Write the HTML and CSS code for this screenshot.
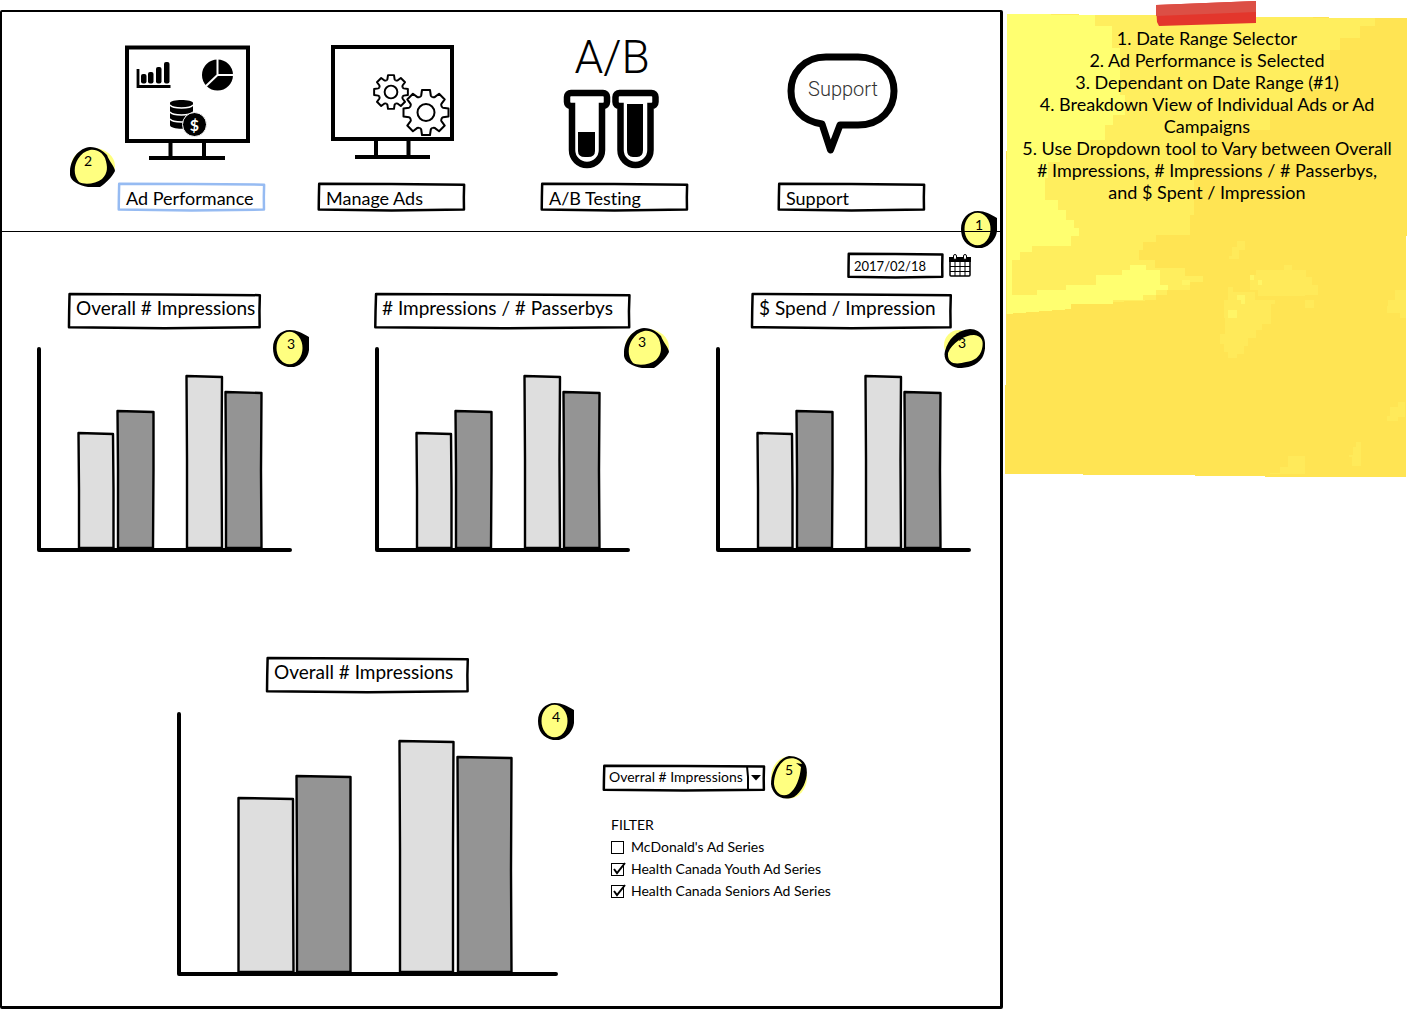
FILE: index.html
```html
<!DOCTYPE html>
<html lang="en">
<head>
<meta charset="utf-8">
<title>Ad Performance</title>
<link rel="stylesheet" href="styles.css">
</head>
<body>
<svg class="defs" aria-hidden="true">
  <symbol id="frame" viewBox="0 0 100 100" preserveAspectRatio="none" overflow="visible">
    <path d="M.8 3L50 4L99.400 6L99.200 50L99.300 95L50 98L.5 95L.6 50Z" vector-effect="non-scaling-stroke"/>
  </symbol>
  <symbol id="badge-a" viewBox="0 0 36 37">
    <path d="M17 0C24 0 29 3 36 7V20C35 28 29 35 21 37H15C5 35 0 28 0 18C0 8 7 0 17 0Z"/>
    <ellipse cx="16.500" cy="18" rx="13" ry="16.300" fill="#ffff80"/>
  </symbol>
  <symbol id="badge-b" viewBox="0 0 45 40">
    <ellipse cx="23" cy="19" rx="22" ry="18" fill="#ffff80"/>
    <path d="M20 0C28 0 33 4 37 8C39 14 45 20 45 24C42 30 36 36 30 40H18C8 38 1 34 0 28C-1 14 8 1 20 0Z"/>
    <path d="M20 3C28 2 32 6 35 11C38 20 38 26 32 32C26 37 14 38 9 35C3 28 4 18 8 12C11 7 15 4 20 3Z" fill="#ffff80"/>
  </symbol>
  <symbol id="badge-c" viewBox="0 0 41 39">
    <ellipse cx="15" cy="16" rx="15" ry="15" fill="#ffff80"/>
    <path d="M1 22C4 10 13 1 26 0C32 0 36 3 39 7C42 12 42 22 38 29C32 37 24 39 14 39C4 37-1 30 1 22Z"/>
    <path d="M4 24C8 14 20 6 30 6C38 7 40 12 38 20C36 28 30 32 22 33C12 36 3 35 4 24Z" fill="#ffff80"/>
  </symbol>
  <symbol id="badge-d" viewBox="0 0 36 43">
    <ellipse cx="18" cy="21.500" rx="18" ry="21" fill="#ffff80"/>
    <path d="M18 0C26 0 33 4 35 10C38 20 33 34 23 41C10 46 1 38 0 28C0 15 8 2 18 0Z"/>
    <path d="M16 3C23 1 29 4 31 8L25 7L30 11C29 22 25 33 18 38C10 42 4 36 3 28C3 18 8 6 16 3Z" fill="#ffff80"/>
  </symbol>
  <symbol id="gear" viewBox="-24 -24 48 48" overflow="visible">
    <g fill="#fff" stroke="#000" stroke-linejoin="round">
      <circle r="16.500" stroke="none"/>
      <g id="quarter"><path id="tooth" d="M-6.500-15.500Q-5-16-4.800-17L-4-22.500H4L4.800-17Q5-16 6.500-15.500"/><use href="#tooth" transform="rotate(45)"/></g>
      <use href="#quarter" transform="rotate(90)"/><use href="#quarter" transform="rotate(180)"/><use href="#quarter" transform="rotate(270)"/>
      <circle r="8.500"/>
    </g>
  </symbol>
  <symbol id="bars-small" viewBox="36 346 257 206">
    <g stroke="#000" stroke-width="2.400" stroke-linejoin="round">
      <path d="M78.500 433L113 434L113.500 490V548H79V490Z" fill="#dedede"/>
      <path d="M117.500 411L153.500 412V470L153 548H118V470Z" fill="#949494"/>
      <path d="M186.500 376L222 377L221.500 460L222 548H187V460Z" fill="#dedede"/>
      <path d="M225.500 392L261.500 393L261 470L261.500 548H226V470Z" fill="#949494"/>
    </g>
    <path d="M39 349V550H290" fill="none" stroke="#000" stroke-width="4" stroke-linecap="round" stroke-linejoin="round"/>
  </symbol>
</svg>

<main class="board">
  <nav class="nav">
    <a class="nav-item selected" href="#performance">
      <svg class="nav-icon" viewBox="118 28 147 150" aria-hidden="true">
        <path d="M127 47.500H248V141H127ZM170.500 143V158M204 143V158M149 158H225" fill="none" stroke="#000" stroke-width="4"/>
        <path d="M138 69V86.500H170.500" fill="none" stroke="#000" stroke-width="2.800"/>
        <rect x="141" y="74" width="5.500" height="9.500" rx="2"/><rect x="148" y="72" width="5.500" height="11.500" rx="2"/><rect x="156" y="67" width="5.500" height="16.500" rx="2"/><rect x="164" y="62" width="5.500" height="21.500" rx="2"/>
        <circle cx="217.500" cy="75" r="15.500"/>
        <path d="M217.500 59V75H234M217.500 75L206 86" fill="none" stroke="#fff" stroke-width="2"/>
        <path d="M170 103C170 99 193 99 193 103V125C193 130 170 130 170 125Z"/>
        <path d="M170 105C173 109 190 109 193 105M170 112C173 116 190 116 193 112M170 119C173 123 190 123 193 119" fill="none" stroke="#fff" stroke-width="1.300"/>
        <circle cx="194.500" cy="124.500" r="12" stroke="#fff"/>
        <text x="194.500" y="130.500" class="coin">$</text>
      </svg>
      <span class="nav-label"><svg class="frame" aria-hidden="true"><use href="#frame"/></svg>Ad Performance</span>
      <span class="badge badge-two"><svg width="45" height="40" aria-hidden="true"><use href="#badge-b"/></svg><b>2</b></span>
    </a>
    <a class="nav-item" href="#manage">
      <svg class="nav-icon" viewBox="318 28 147 150" aria-hidden="true">
        <path d="M333 47H452V139H333ZM376 141V157M408.500 141V157M355 157H430" fill="none" stroke="#000" stroke-width="4"/>
        <use href="#gear" x="373" y="74" width="36" height="36" stroke-width="2.600"/>
        <use href="#gear" x="402" y="88.500" width="48" height="48" stroke-width="2"/>
      </svg>
      <span class="nav-label"><svg class="frame" aria-hidden="true"><use href="#frame"/></svg>Manage Ads</span>
    </a>
    <a class="nav-item" href="#testing">
      <svg class="nav-icon" viewBox="541 28 147 150" aria-hidden="true">
        <text x="612" y="73" class="ab">A/B</text>
        <g id="tube"><path d="M572 106H571A4 4 0 0 1 567 102V97A4 4 0 0 1 571 93H603A4 4 0 0 1 607 97V102A4 4 0 0 1 603 106H602V150A15 15 0 0 1 572 150Z" fill="#fff" stroke="#000" stroke-width="6.500"/></g>
        <use href="#tube" x="48.500"/>
        <path d="M578 132H595V151Q595 157 588 157H585Q578 157 578 151ZM627 104H643V150Q643 157 637 157H633Q627 157 627 150Z"/>
      </svg>
      <span class="nav-label"><svg class="frame" aria-hidden="true"><use href="#frame"/></svg>A/B Testing</span>
    </a>
    <a class="nav-item" href="#support">
      <svg class="nav-icon" viewBox="778 28 147 150" aria-hidden="true">
        <path d="M826 57H858C882 57 894 74 894 91S882 125 858 125H840L830.500 150L822 124C802 121 791 108 791 91C791 74 803 57 826 57Z" fill="#fff" stroke="#000" stroke-width="7" stroke-linejoin="round"/>
        <text x="843" y="96" class="bubble">Support</text>
      </svg>
      <span class="nav-label"><svg class="frame" aria-hidden="true"><use href="#frame"/></svg>Support</span>
    </a>
    <span class="badge badge-one"><svg width="36" height="37" aria-hidden="true"><use href="#badge-a"/></svg><b>1</b></span>
  </nav>

  <form class="date-row">
    <span class="field date-field"><svg class="frame" aria-hidden="true"><use href="#frame"/></svg><input type="text" aria-label="Date range" value="2017/02/18"></span>
    <button class="calendar" type="button" aria-label="Open calendar">
      <svg width="24" height="26" viewBox="0 0 24 26" aria-hidden="true">
        <rect x="2" y="5" width="20" height="18" rx="1" fill="#fff" stroke="#000" stroke-width="1.500"/>
        <path d="M1 4H23V9H1Z"/>
        <path d="M2 13.500H22M2 18.500H22M7 9V23M12 9V23M17 9V23" stroke="#000"/>
        <rect x="5.500" y="1.500" width="3" height="5" rx="1.500" fill="#fff" stroke="#000"/><rect x="15.500" y="1.500" width="3" height="5" rx="1.500" fill="#fff" stroke="#000"/>
      </svg>
    </button>
  </form>

  <section class="charts">
    <article class="chart">
      <h2 class="chart-title title-overall"><svg class="frame" aria-hidden="true"><use href="#frame"/></svg>Overall # Impressions</h2>
      <svg class="chart-plot" role="img" aria-label="Overall impressions chart"><use href="#bars-small"/></svg>
      <span class="badge badge-overall"><svg width="36" height="37" aria-hidden="true"><use href="#badge-a"/></svg><b>3</b></span>
    </article>
    <article class="chart">
      <h2 class="chart-title title-passerbys"><svg class="frame" aria-hidden="true"><use href="#frame"/></svg># Impressions / # Passerbys</h2>
      <svg class="chart-plot" role="img" aria-label="Impressions per passerby chart"><use href="#bars-small"/></svg>
      <span class="badge badge-passerbys"><svg width="45" height="40" aria-hidden="true"><use href="#badge-b"/></svg><b>3</b></span>
    </article>
    <article class="chart">
      <h2 class="chart-title title-spend"><svg class="frame" aria-hidden="true"><use href="#frame"/></svg>$ Spend / Impression</h2>
      <svg class="chart-plot" role="img" aria-label="Spend per impression chart"><use href="#bars-small"/></svg>
      <span class="badge badge-spend"><svg width="41" height="39" aria-hidden="true"><use href="#badge-c"/></svg><b>3</b></span>
    </article>
  </section>

  <section class="breakdown">
    <article class="breakdown-chart">
      <h2 class="chart-title title-breakdown"><svg class="frame" aria-hidden="true"><use href="#frame"/></svg>Overall # Impressions</h2>
      <svg class="breakdown-plot" viewBox="177 711 381 266" role="img" aria-label="Breakdown chart">
        <g stroke="#000" stroke-width="2.400" stroke-linejoin="round">
          <path d="M238.500 798L293 799V870L293.500 972H238.500V880Z" fill="#dedede"/>
          <path d="M296.500 776L350.500 777V870V972H297V870Z" fill="#949494"/>
          <path d="M399.500 741L453.500 742L453 850V972H400V850Z" fill="#dedede"/>
          <path d="M457.500 757L511.500 758L511 870L511.500 972H458V860Z" fill="#949494"/>
        </g>
        <path d="M179 714V974H556" fill="none" stroke="#000" stroke-width="4" stroke-linecap="round" stroke-linejoin="round"/>
      </svg>
      <span class="badge badge-four"><svg width="36" height="37" aria-hidden="true"><use href="#badge-a"/></svg><b>4</b></span>
    </article>
    <form class="filters">
      <span class="field metric">
        <svg class="frame" aria-hidden="true"><use href="#frame"/></svg>
        <select aria-label="Metric"><option>Overral # Impressions</option><option># Impressions / # Passerbys</option><option>$ Spent / Impression</option></select>
        <svg class="arrow" width="19" height="26" viewBox="0 0 19 26" aria-hidden="true"><path d="M1 1L2 12V25" fill="none" stroke="#000" stroke-width="2"/><path d="M5 10H15L10 15.500Z"/></svg>
        <span class="badge badge-five"><svg width="36" height="43" aria-hidden="true"><use href="#badge-d"/></svg><b>5</b></span>
      </span>
      <fieldset>
        <legend>FILTER</legend>
        <label><input type="checkbox"><svg class="tick" viewBox="0 0 16 16" aria-hidden="true"><path d="M3 8L6 12L14 2"/></svg>McDonald's Ad Series</label>
        <label><input type="checkbox" checked><svg class="tick" viewBox="0 0 16 16" aria-hidden="true"><path d="M3 8L6 12L14 2"/></svg>Health Canada Youth Ad Series</label>
        <label><input type="checkbox" checked><svg class="tick" viewBox="0 0 16 16" aria-hidden="true"><path d="M3 8L6 12L14 2"/></svg>Health Canada Seniors Ad Series</label>
      </fieldset>
    </form>
  </section>
</main>

<aside class="note">
  <svg class="paper" viewBox="1005 14 402 463" preserveAspectRatio="none" shape-rendering="crispEdges" aria-hidden="true">
    <path d="M1007 14L1150 15L1250 17L1407 18L1406 477L1300 477L1160 475L1005 474L1006 300Z" fill="#ffe453"/>
    <path d="M1007 14L1150 15L1250 17L1375 18V26H1360V38H1340V50H1330V90H1300V110H1270V130H1200V150H1194V215H1190V235H1156V242H1143V250H1139V260H1155V268H1185V276H1203V282H1190V290H1167V295H1156V300L1070 304L1006 314Z" fill="#ffee5e"/>
    <path d="M1007 14L1095 15V26H1112V48H1120V95H1125V115H1113V125H1105V140H1090V150H1060V162H1048V178H1045V200H1058V210H1066V220H1074V228H1079V236H1071V246H1032V252H1020V260H1012V295H1037V290H1066V285H1096V275H1122V270H1130V265H1146V270H1160V285H1168V290H1156V295H1143V300H1113V304H1071V309L1007 314Z" fill="#ffff70"/>
    <path d="M1237 241H1245V250H1239V259H1229V256H1232V247H1237ZM1250 275H1256V270H1284V265H1292V270H1306V277H1312V285H1318V295H1305V300H1314V308H1305V296H1258V290H1250ZM1228 287H1233V292H1255V300H1275V304H1271V324H1262V330H1256V338H1248V346H1244V354H1237V358H1228V352H1224V344H1220V334H1225V318H1224V300H1228ZM1388 300H1395V290H1406V318H1400V313H1387ZM1390 407H1398V402H1405V417H1398V421H1387V416H1390ZM1356 442H1361V466H1352V457H1349V455H1353V447H1356ZM1288 456H1305V474H1270V473H1280V467H1288Z" fill="#ffea5a"/>
    <path d="M1182 280H1190V285H1182ZM1250 275H1254V280H1250ZM1258 280H1262V285H1258ZM1237 295H1245V304H1241V300H1237ZM1228 310H1237V318H1228Z" fill="#fff566"/>
  </svg>
  <svg class="tape" viewBox="0 0 101 26" width="101" height="26" aria-hidden="true">
    <path d="M0 5L100 1V23L3 26L1 22Z" fill="#e3362c"/>
    <path d="M0 5L100 1V12L0 16Z" fill="#dc4f45"/>
  </svg>
  <p>1. Date Range Selector<br>2. Ad Performance is Selected<br>3. Dependant on Date Range (#1)<br>4. Breakdown View of Individual Ads or Ad<br>Campaigns<br>5. Use Dropdown tool to Vary between Overall<br># Impressions, # Impressions / # Passerbys,<br>and $ Spent / Impression</p>
</aside>
</body>
</html>
```
FILE: styles.css
```css
* { box-sizing: border-box; }

body {
  margin: 0;
  display: flex;
  align-items: flex-start;
  background: #fff;
  color: #000;
  font-family: Lato, "Open Sans", sans-serif;
  font-size: 18px;
  font-variant-ligatures: none;
}

svg { display: block; }
.defs { position: absolute; width: 0; height: 0; }

.board {
  flex: 1;
  min-width: 0;
  margin-top: 10px;
  border: 3px solid #000;
  border-width: 2px 3px 3px 2px;
  border-radius: 2px;
  isolation: isolate;
}

/* Hand-drawn outline stretched over its parent box */
.frame {
  position: absolute;
  inset: 0;
  width: 100%;
  height: 100%;
  overflow: visible;
  fill: none;
  stroke: #000;
  stroke-width: 2.5;
  stroke-linejoin: round;
  pointer-events: none;
}

.badge { position: absolute; }
.badge b {
  position: absolute;
  top: 6px;
  left: 10px;
  width: 16px;
  line-height: 16px;
  text-align: center;
  font-size: 14px;
  font-weight: 400;
}

/* Navigation */
.nav {
  position: relative;
  display: grid;
  grid-template-columns: 200fr 223fr 237fr 222fr;
  padding: 16px 0 20px 116px;
  border-bottom: 1px solid #000;
}
.nav-item {
  position: relative;
  display: flex;
  flex-direction: column;
  align-items: flex-start;
  gap: 5px;
  color: inherit;
  text-decoration: none;
}
.nav-icon { width: 147px; height: 150px; }
.nav-label {
  position: relative;
  width: 147px;
  height: 28px;
  padding: 2px 8px 0;
  line-height: 26px;
  white-space: nowrap;
}
.selected .frame { stroke: #96bbf2; }
.coin { font: 700 16px Lato, sans-serif; fill: #fff; text-anchor: middle; }
.ab { font: 300 46px Roboto, sans-serif; text-anchor: middle; }
.bubble { font: 300 20px Roboto, sans-serif; fill: #333; text-anchor: middle; }
.badge-two { left: -48px; top: 119px; }
.badge-one { right: 3px; bottom: -17px; z-index: -1; }

/* Date picker */
.date-row {
  display: flex;
  justify-content: flex-end;
  gap: 5px;
  padding: 21px 28px 0 0;
}
.field { position: relative; display: block; }
.date-field { width: 95px; height: 25px; }
.date-field input {
  width: 100%;
  height: 100%;
  padding: 0 6px 2px;
  border: 0;
  background: none;
  font: inherit;
  font-size: 13px;
}
.calendar { padding: 0; border: 0; background: none; }

/* Summary charts */
.charts {
  display: grid;
  grid-template-columns: 338fr 341fr 285fr;
  padding: 14px 0 0 34px;
}
.chart { position: relative; }
.chart-title {
  position: relative;
  height: 36px;
  margin: 0 0 17px;
  padding: 0 8px;
  line-height: 30px;
  font-size: 19px;
  font-weight: 400;
  white-space: nowrap;
}
.title-overall { width: 193px; margin-left: 32px; }
.title-passerbys { width: 257px; }
.title-spend { width: 201px; margin-left: 36px; }
.title-breakdown { width: 203px; margin-bottom: 18px; }
.chart-plot { width: 257px; height: 206px; }
.badge-overall { left: 237px; top: 37px; }
.badge-passerbys { left: 250px; top: 35px; }
.badge-spend { left: 229px; top: 36px; }

/* Breakdown */
.breakdown {
  display: flex;
  gap: 45px;
  padding: 105px 0 29px 175px;
}
.breakdown-chart {
  position: relative;
  display: flex;
  flex-direction: column;
  align-items: center;
}
.breakdown-plot { width: 381px; height: 266px; }
.badge-four { right: -16px; top: 46px; }
.filters { padding-top: 108px; font-size: 14px; }
.metric { width: 162px; height: 26px; }
.metric select {
  appearance: none;
  width: 100%;
  height: 100%;
  padding: 0 6px 4px;
  border: 0;
  background: none;
  color: #000;
  font: inherit;
  font-size: 14px;
}
.arrow { position: absolute; right: 0; top: 0; pointer-events: none; }
.badge-five { left: 168px; top: -9px; }
fieldset {
  display: flex;
  flex-direction: column;
  margin: 22px 0 0;
  padding: 0 8px;
  border: 0;
}
legend { padding: 0; line-height: 23px; }
label {
  position: relative;
  display: flex;
  align-items: center;
  gap: 7px;
  line-height: 22px;
  white-space: nowrap;
}
label input {
  appearance: none;
  width: 13px;
  height: 13px;
  margin: 0;
  border: 1px solid #000;
}
.tick {
  display: none;
  position: absolute;
  left: 0;
  top: 3px;
  width: 16px;
  height: 16px;
  fill: none;
  stroke: #000;
  stroke-width: 2px;
}
input:checked + .tick { display: block; }

/* Sticky note */
.note {
  position: relative;
  width: 406px;
  margin-top: 14px;
  padding: 13px 2px 274px 4px;
}
.paper {
  position: absolute;
  inset: 0 2px 0 2px;
  width: 402px;
  height: 100%;
}
.tape { position: absolute; left: 153px; top: -14px; }
.note p {
  position: relative;
  margin: 0;
  text-align: center;
  line-height: 22px;
  white-space: nowrap;
}
```
